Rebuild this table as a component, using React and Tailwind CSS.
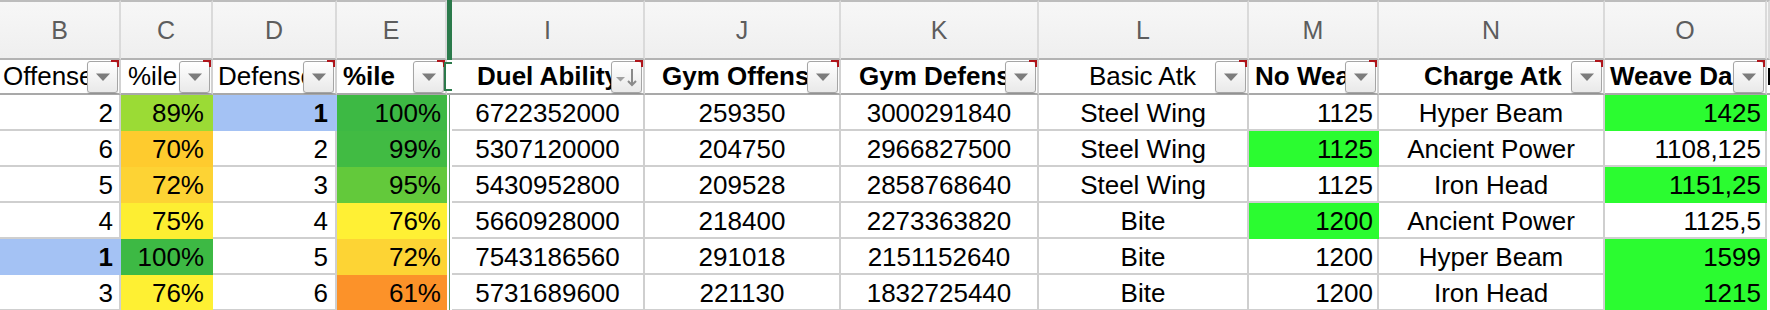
const GREEN = "bg-[#2bfc30]";
const BLUE = "bg-[#a4c2f4]";

const letters = ["B", "C", "D", "E", "", "I", "J", "K", "L", "M", "N", "O", ""];

// pad = where the header text starts inside its cell, as in the sheet
const headers = [
  { text: "Offense Rank", pad: "pl-[3px]" },
  { text: "%ile", pad: "pl-[7px]" },
  { text: "Defense Rank", pad: "pl-[5px]" },
  { text: "%ile", pad: "pl-[6px]", bold: true },
  null,
  { text: "Duel Ability", pad: "pl-[25px]", bold: true, sort: true },
  { text: "Gym Offense", pad: "pl-[17px]", bold: true },
  { text: "Gym Defense", pad: "pl-[18px]", bold: true },
  { text: "Basic Atk", pad: "pl-[50px]" },
  { text: "No Weave Damage", pad: "pl-[6px]", bold: true },
  { text: "Charge Atk", pad: "pl-[45px]", bold: true },
  { text: "Weave Damage", pad: "pl-[5px]", bold: true },
];

// [value, fill, bold]
const rows = [
  [["2"], ["89%", "bg-[#9bdb35]"], ["1", BLUE, true], ["100%", "bg-[#3db944]"], "6722352000", "259350", "3000291840", "Steel Wing", ["1125"], "Hyper Beam", ["1425", GREEN]],
  [["6"], ["70%", "bg-[#fecb2e]"], ["2"], ["99%", "bg-[#41bb43]"], "5307120000", "204750", "2966827500", "Steel Wing", ["1125", GREEN], "Ancient Power", ["1108,125"]],
  [["5"], ["72%", "bg-[#fdd334]"], ["3"], ["95%", "bg-[#63c93b]"], "5430952800", "209528", "2858768640", "Steel Wing", ["1125"], "Iron Head", ["1151,25", GREEN]],
  [["4"], ["75%", "bg-[#fdee32]"], ["4"], ["76%", "bg-[#fff034]"], "5660928000", "218400", "2273363820", "Bite", ["1200", GREEN], "Ancient Power", ["1125,5"]],
  [["1", BLUE, true], ["100%", "bg-[#3db944]"], ["5"], ["72%", "bg-[#fdd434]"], "7543186560", "291018", "2151152640", "Bite", ["1200"], "Hyper Beam", ["1599", GREEN]],
  [["3"], ["76%", "bg-[#fef033]"], ["6"], ["61%", "bg-[#fc9229]"], "5731689600", "221130", "1832725440", "Bite", ["1200"], "Iron Head", ["1215", GREEN]],
];

const rightPad = ["pr-[6px]", "pr-[7px]", "pr-[7px]", "pr-[4px]"];

function FilterButton({ sort }) {
  return (
    <div className="mr-[1px] mt-[1px] flex h-[32px] w-[31px] shrink-0 items-center justify-center self-start rounded-[3px] border border-[#a5a5a5] bg-linear-to-b from-white to-[#e9e9e9] shadow-[0_1px_1px_rgba(0,0,0,0.15)]">
      {sort ? (
        <svg width="26" height="22" viewBox="0 0 26 22">
          <path d="M2 11 H11 L6.5 15.5 Z" fill="#a0a0a0" />
          <path d="M18 3 V19" stroke="#8a8a8a" strokeWidth="2" />
          <path d="M14 15 L18 19 L22 15" stroke="#8a8a8a" strokeWidth="2" fill="none" />
        </svg>
      ) : (
        <svg width="16" height="10" viewBox="0 0 16 10">
          <path d="M1 1.5 H15 L8 9 Z" fill="#7c7c7c" />
        </svg>
      )}
    </div>
  );
}

export default function App() {
  return (
    <div className="h-[310px] w-[1770px] overflow-hidden bg-white font-['Liberation_Sans',Arial,sans-serif] text-[26px] text-black">
      <div className="grid grid-cols-[121px_92px_124px_110px_5px_193px_196px_198px_210px_130px_226px_162px_3px]">

        {/* column letters */}
        {letters.map((l, i) =>
          i === 4 ? (
            <div key={"l" + i} className="h-[60px] bg-[#2b7a4b]" />
          ) : (
            <div
              key={"l" + i}
              className="flex h-[60px] items-center justify-center border-t-2 border-b-2 border-r-2 border-t-[#bdbdbd] border-b-[#b3b3b3] border-r-[#dadada] bg-linear-to-b from-[#f7f7f7] to-[#efefef] pt-[2px] text-[25px] text-[#5d5d5d]"
            >
              {l}
            </div>
          )
        )}

        {/* filter header row */}
        {headers.map((h, i) =>
          h === null ? (
            <div key={"h" + i} className="relative h-[35px] border-b-2 border-b-[#a9a9a9] bg-white">
              <div className="absolute left-[-3px] right-[-2px] top-[2px] bottom-[2px] border-2 border-[#2b7a4b] bg-white" />
            </div>
          ) : (
            <div
              key={"h" + i}
              className="relative flex h-[35px] items-center border-b-2 border-r-2 border-b-[#a9a9a9] border-r-[#d2d2d2] bg-white"
            >
              <div className={"min-w-0 flex-1 overflow-hidden whitespace-nowrap " + h.pad + (h.bold ? " font-bold" : "")}>
                {h.text}
              </div>
              <FilterButton sort={h.sort} />
              <div className="absolute right-0 top-0 h-[7px] w-[8px] border-t-2 border-r-2 border-[#b0151b]" />
            </div>
          )
        )}
        <div className="flex h-[35px] items-center border-b-2 border-b-[#a9a9a9]">
          <div className="ml-[1px] h-[17px] w-[2px] bg-black" />
        </div>

        {/* data rows */}
        {rows.map((r, ri) => (
          <Row key={ri} r={r} />
        ))}
      </div>
    </div>
  );
}

function Row({ r }) {
  const cells = [];
  r.forEach((v, ci) => {
    if (ci === 4) {
      cells.push(
        <div key="sep" className="flex h-[36px] justify-center bg-white">
          <div className="h-full w-[1px] bg-[#5f9a6c]" />
        </div>
      );
    }
    const isArr = Array.isArray(v);
    const text = isArr ? v[0] : v;
    const fill = isArr ? v[1] : null;
    const bold = isArr ? v[2] : false;
    const right = ci < 4 || ci === 8 || ci === 10;
    let pad = "";
    if (ci < 4) pad = rightPad[ci];
    else if (right) pad = "pr-[4px]";
    cells.push(
      <div
        key={ci}
        className={
          "flex h-[36px] items-center overflow-hidden whitespace-nowrap border-r-2 border-b-2 pt-[3px] " +
          (fill ? fill + " border-transparent " : "bg-white border-[#cfcfcf] ") +
          (right ? "justify-end " : "justify-center ") +
          pad +
          (bold ? " font-bold" : "")
        }
      >
        {text}
      </div>
    );
  });
  cells.push(<div key="end" className="h-[36px] bg-white" />);
  return <>{cells}</>;
}
